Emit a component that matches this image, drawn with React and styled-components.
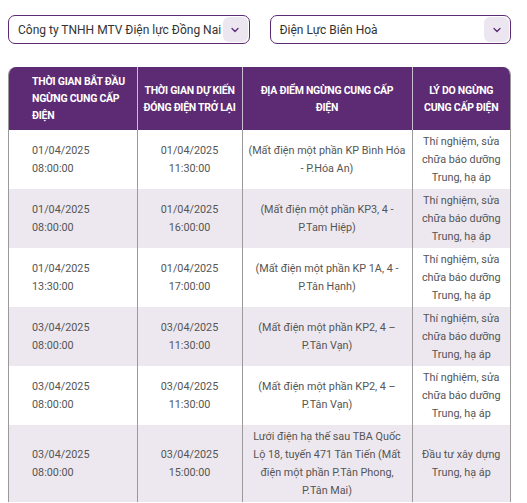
import React from 'react';
import styled, { createGlobalStyle } from 'styled-components';

const Global = createGlobalStyle`
  body {
    margin: 8px;
    background: #ffffff;
    font-family: Roboto, 'Liberation Sans', sans-serif;
  }
`;

const Page = styled.div`
  width: 503px;
  padding-top: 7px;
`;

const Filters = styled.div`
  display: flex;
  gap: 20px;
  margin-bottom: 23px;
`;

const Select = styled.div`
  flex: 1;
  min-width: 0;
  height: 29px;
  box-sizing: border-box;
  border: 1px solid #5d2b74;
  border-radius: 7px;
  display: flex;
  align-items: center;
  padding: 0 1px 0 9px;
  background: #ffffff;
`;

const Value = styled.span`
  flex: 1;
  min-width: 0;
  font-size: 12px;
  color: #333333;
  white-space: nowrap;
  overflow: hidden;
`;

const Chevron = styled.span`
  width: 25px;
  height: 25px;
  border-radius: 6px;
  background: #ece6f1;
  display: flex;
  align-items: center;
  justify-content: center;
  flex-shrink: 0;
`;

const TableWrap = styled.div`
  border-radius: 8px 8px 0 0;
  overflow: hidden;
  border-left: 1px solid #9a9a9a;
  border-right: 1px solid #9a9a9a;
  box-sizing: border-box;
`;

const Table = styled.table`
  width: 100%;
  border-collapse: collapse;
  table-layout: fixed;
`;

const Th = styled.th`
  background: #5d2a74;
  color: #ffffff;
  font-size: 10.5px;
  font-weight: 700;
  line-height: 17px;
  letter-spacing: -0.25px;
  padding: ${(p) => (p.$left ? '6px 4px 6px 23px' : `6px ${p.$pad || 3}px`)};
  text-align: ${(p) => (p.$left ? 'left' : 'center')};
  border-left: 1px solid #c9bfd0;
  &:first-child {
    border-left: none;
  }
`;

const Tr = styled.tr`
  background: ${(p) => (p.$alt ? '#ede8ef' : '#ffffff')};
`;

const Td = styled.td`
  color: #555555;
  font-size: 10.8px;
  line-height: 18px;
  padding: ${(p) => (p.$left ? '2.5px 8px 2.5px 23px' : `2.5px ${p.$pad || 9}px`)};
  text-align: ${(p) => (p.$left ? 'left' : 'center')};
  vertical-align: middle;
  border-left: 1px solid #9a9a9a;
  &:first-child {
    border-left: none;
  }
`;

const Arrow = () => (
  <svg width="12" height="12" viewBox="0 0 24 24" fill="none" stroke="#5d2a74" strokeWidth="2.6" strokeLinecap="round" strokeLinejoin="round">
    <path d="m6 9 6 6 6-6" />
  </svg>
);

const rows = [
  ['01/04/2025', '08:00:00', '01/04/2025', '11:30:00', '(Mất điện một phần KP Bình Hóa - P.Hóa An)', 'Thí nghiệm, sửa chữa báo dưỡng Trung, hạ áp'],
  ['01/04/2025', '08:00:00', '01/04/2025', '16:00:00', '(Mất điện một phần KP3, 4 - P.Tam Hiệp)', 'Thí nghiệm, sửa chữa báo dưỡng Trung, hạ áp'],
  ['01/04/2025', '13:30:00', '01/04/2025', '17:00:00', '(Mất điện một phần KP 1A, 4 - P.Tân Hạnh)', 'Thí nghiệm, sửa chữa báo dưỡng Trung, hạ áp'],
  ['03/04/2025', '08:00:00', '03/04/2025', '11:30:00', '(Mất điện một phần KP2, 4 – P.Tân Vạn)', 'Thí nghiệm, sửa chữa báo dưỡng Trung, hạ áp'],
  ['03/04/2025', '08:00:00', '03/04/2025', '11:30:00', '(Mất điện một phần KP2, 4 – P.Tân Vạn)', 'Thí nghiệm, sửa chữa báo dưỡng Trung, hạ áp'],
  ['03/04/2025', '08:00:00', '03/04/2025', '15:00:00', 'Lưới điện hạ thế sau TBA Quốc Lộ 18, tuyến 471 Tân Tiến (Mất điện một phần P.Tân Phong, P.Tân Mai)', 'Đầu tư xây dựng Trung, hạ áp'],
];

export default function App() {
  return (
    <Page>
      <Global />
      <Filters>
        <Select>
          <Value>Công ty TNHH MTV Điện lực Đồng Nai</Value>
          <Chevron><Arrow /></Chevron>
        </Select>
        <Select>
          <Value>Điện Lực Biên Hoà</Value>
          <Chevron><Arrow /></Chevron>
        </Select>
      </Filters>
      <TableWrap>
        <Table>
          <colgroup>
            <col style={{ width: 128 }} />
            <col style={{ width: 105 }} />
            <col style={{ width: 170 }} />
            <col />
          </colgroup>
          <thead>
            <tr>
              <Th $left>THỜI GIAN BẮT ĐẦU NGỪNG CUNG CẤP ĐIỆN</Th>
              <Th>THỜI GIAN DỰ KIẾN ĐÓNG ĐIỆN TRỞ LẠI</Th>
              <Th $pad={12}>ĐỊA ĐIỂM NGỪNG CUNG CẤP ĐIỆN</Th>
              <Th>LÝ DO NGỪNG CUNG CẤP ĐIỆN</Th>
            </tr>
          </thead>
          <tbody>
            {rows.map((r, i) => (
              <Tr key={i} $alt={i % 2 === 1}>
                <Td $left>{r[0]}<br />{r[1]}</Td>
                <Td>{r[2]}<br />{r[3]}</Td>
                <Td $pad={5}>{r[4]}</Td>
                <Td>{r[5]}</Td>
              </Tr>
            ))}
          </tbody>
        </Table>
      </TableWrap>
    </Page>
  );
}
